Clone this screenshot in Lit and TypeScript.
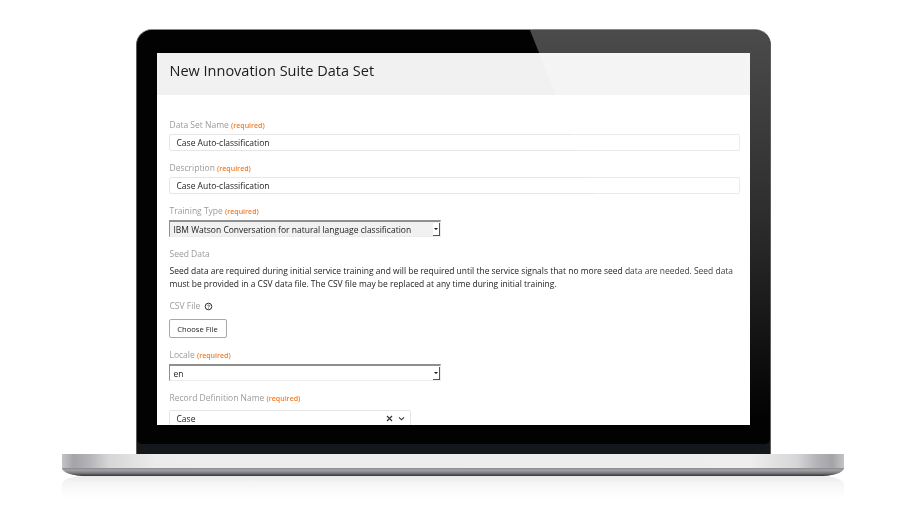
import { LitElement, html, css } from "lit";
import { customElement } from "lit/decorators.js";

const req = html`<span class="req">(required)</span>`;

@customElement("app-root")
export class AppRoot extends LitElement {
  static styles = css`
    :host { display: block; width: 900px; height: 516px; background: #fff; overflow: hidden; font-family: "Open Sans", "Liberation Sans", sans-serif; }
    .stage { display: flex; flex-direction: column; align-items: center; padding: 29px 0 0 6px; }
    .lid { position: relative; box-sizing: border-box; width: 635px; height: 425px; padding: 23px 20px 0 20px; overflow: hidden;
      background: #14181c; border-radius: 16px 16px 0 0; border: 1px solid #5c5c5c; border-bottom: none; border-top-color: #8a8a8a; }
    .lid::before { content: ""; position: absolute; inset: 0 0 10px 0; background: #020202; border-radius: 14px 14px 5px 5px; }
    .screen { position: relative; box-sizing: border-box; height: 372px; background: #fff; overflow: hidden; filter: blur(0.3px); }
    .head { height: 42px; background: #f1f1f1; display: flex; align-items: center; padding: 0 13px; margin-bottom: 24px; }
    h1 { margin: 0; font-size: 14.5px; font-weight: 400; color: #1c1c1c; line-height: 20px; position: relative; top: -3px; }
    .form { display: flex; flex-direction: column; padding: 0 10px 0 12px; }
    .label { font-size: 8.5px; line-height: 12px; color: #9b9b9b; height: 12px; padding-left: 1px; }
    .req { font-size: 7px; color: #f47a20; font-weight: 600; margin-left: 0; }
    .input { box-sizing: border-box; height: 17px; margin-top: 3px; border: 1px solid #e6e6e6; border-radius: 2px; font-size: 8.5px; line-height: 16px; color: #222; padding-left: 7px; }
    .gap { height: 11px; }
    .select { box-sizing: border-box; width: 272px; height: 17px; margin-top: 3px; display: flex; align-items: center; justify-content: space-between;
      border: 1px solid; border-color: #8f8f8f #ececec #ececec #8f8f8f; border-top-width: 2px; font-size: 8.5px; color: #222; padding: 0 0 0 4px; background: #f1f1f1; }
    .select.white { background: #fff; }
    .arrow { box-sizing: border-box; width: 7px; height: 13px; background: #fff; border-right: 1px solid #555; border-bottom: 1px solid #555; display: flex; align-items: center; justify-content: center; }
    .arrow::after { content: ""; border: 2px solid transparent; border-top: 2.5px solid #111; margin-top: 2px; }
    .p { margin: 4px 0 0; padding-left: 1px; font-size: 8.46px; line-height: 13px; color: #222; }
    .csv { display: flex; align-items: center; gap: 4px; margin-top: 10px; }
    .q { display: block; width: 9px; height: 9px; }
    .btn { box-sizing: border-box; width: 58px; height: 19px; margin-top: 7px; padding-top: 1px; border: 1px solid #a8a8a8; border-radius: 2px; display: flex; align-items: center; justify-content: center; font-size: 7.6px; color: #222; background: #fff; }
    .combo { box-sizing: border-box; width: 242px; height: 22px; margin-top: 6px; border: 1px solid #e6e6e6; border-radius: 2px; display: flex; padding: 1px 5px 0 7px; justify-content: space-between; font-size: 8.5px; color: #222; line-height: 13px; }
    .combo svg { display: block; margin-top: 3px; }
    .tools { display: flex; gap: 5px; }
    .glare { position: absolute; inset: -1px; pointer-events: none;
      background: linear-gradient(rgba(255,255,255,.29), rgba(255,255,255,.17) 190px, rgba(255,255,255,0) 390px);
      clip-path: polygon(394px 0, 635px 0, 635px 425px, 565px 425px); }
    .base { width: 782px; height: 22px; border-radius: 0 0 25px 25px / 0 0 8px 8px; overflow: hidden; display: flex; flex-direction: column;
      margin-left: -1px; background: linear-gradient(90deg, #c4c4c6 0, #a4a4a8 1.5%, #b4b4b8 3.5%, #d6d6d8 6%, #ececec 12%, #eeeeee 88%, #d6d6d8 94%, #b4b4b8 96.5%, #a4a4a8 98.5%, #c4c4c6 100%); }
    .top { height: 14px; }
    .bottom { height: 8px; background: linear-gradient(#8e8e92, #a0a0a4 30%, #78787c 65%, #333335 100%); }
    .reflect { width: 782px; height: 24px; margin-left: -1px; border-radius: 25px 25px 0 0 / 8px 8px 0 0; background: linear-gradient(#e9e9e9, #f6f6f6 30%, #fff 95%); }
  `;

  render() {
    return html`<div class="stage">
      <div class="lid">
        <div class="screen">
          <div class="head"><h1>New Innovation Suite Data Set</h1></div>
          <div class="form">
            <div class="label">Data Set Name ${req}</div>
            <div class="input">Case Auto-classification</div>
            <div class="gap"></div>
            <div class="label">Description ${req}</div>
            <div class="input">Case Auto-classification</div>
            <div class="gap"></div>
            <div class="label">Training Type ${req}</div>
            <div class="select"><span>IBM Watson Conversation for natural language classification</span><span class="arrow"></span></div>
            <div class="gap"></div>
            <div class="label">Seed Data</div>
            <p class="p">Seed data are required during initial service training and will be required until the service signals that no more seed data are needed. Seed data must be provided in a CSV data file. The CSV file may be replaced at any time during initial training.</p>
            <div class="csv"><span class="label">CSV File</span>
              <svg class="q" viewBox="0 0 9 9" fill="none" stroke="#333" stroke-width="1"><circle cx="4.5" cy="4.5" r="3.3"/><path d="M3.4 3.6c.2-.7 2.2-.8 2.2.3 0 .7-1.1.7-1.1 1.5" stroke-width=".8"/><path d="M4.5 6.1v.6" stroke-width=".8"/></svg>
            </div>
            <div class="btn">Choose File</div>
            <div class="gap"></div>
            <div class="label">Locale ${req}</div>
            <div class="select white"><span>en</span><span class="arrow"></span></div>
            <div class="gap"></div>
            <div class="label">Record Definition Name ${req}</div>
            <div class="combo"><span>Case</span>
              <span class="tools">
                <svg width="7" height="7" viewBox="0 0 7 7" stroke="#333" stroke-width="1.1"><path d="M1 1l5 5M6 1l-5 5"/></svg>
                <svg width="7" height="7" viewBox="0 0 7 7" fill="none" stroke="#333" stroke-width="1.1"><path d="M1 2.3l2.5 2.5L6 2.3"/></svg>
              </span>
            </div>
          </div>
        </div>
        <div class="glare"></div>
      </div>
      <div class="base"><div class="top"></div><div class="bottom"></div></div>
      <div class="reflect"></div>
    </div>`;
  }
}
